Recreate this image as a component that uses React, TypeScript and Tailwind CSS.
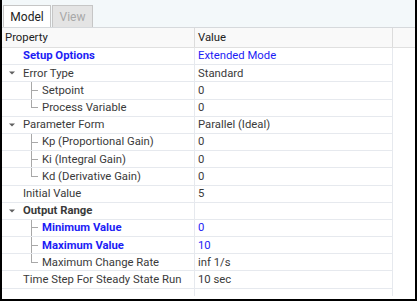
import React from "react";

type Row = {
  label: string;
  value: string;
  level: 0 | 1;
  expander?: boolean;
  bold?: boolean;
  blue?: boolean;
  valueBlue?: boolean;
  last?: boolean;
};

const rows: Row[] = [
  { label: "Setup Options", value: "Extended Mode", level: 0, bold: true, blue: true, valueBlue: true },
  { label: "Error Type", value: "Standard", level: 0, expander: true },
  { label: "Setpoint", value: "0", level: 1 },
  { label: "Process Variable", value: "0", level: 1, last: true },
  { label: "Parameter Form", value: "Parallel (Ideal)", level: 0, expander: true },
  { label: "Kp (Proportional Gain)", value: "0", level: 1 },
  { label: "Ki (Integral Gain)", value: "0", level: 1 },
  { label: "Kd (Derivative Gain)", value: "0", level: 1, last: true },
  { label: "Initial Value", value: "5", level: 0 },
  { label: "Output Range", value: "", level: 0, expander: true, bold: true },
  { label: "Minimum Value", value: "0", level: 1, bold: true, blue: true, valueBlue: true },
  { label: "Maximum Value", value: "10", level: 1, bold: true, blue: true, valueBlue: true },
  { label: "Maximum Change Rate", value: "inf 1/s", level: 1, last: true },
  { label: "Time Step For Steady State Run", value: "10 sec", level: 0 },
];

function Expander() {
  return (
    <svg width="6" height="4" viewBox="0 0 6 4" className="shrink-0">
      <path d="M0 0.5 L6 0.5 L3 3.5 Z" fill="#606060" />
    </svg>
  );
}

function TreeLine({ last }: { last?: boolean }) {
  return (
    <div className="flex h-full w-[7px] shrink-0 flex-col">
      <div className="flex-1 border-b border-l border-[#a8a8a8]" />
      <div className={"flex-1 " + (last ? "" : "border-l border-[#a8a8a8]")} />
    </div>
  );
}

function GridRow({ row }: { row: Row }) {
  const labelCls =
    (row.bold ? "font-bold " : "") + (row.blue ? "text-[#1c1cf5]" : "text-[#3a3a3a]");
  return (
    <div className="flex h-[17.2px] items-stretch">
      <div className="flex w-[193px] items-center border-b border-r border-[#e6e9ee]">
        {row.level === 0 ? (
          <div className="flex items-center">
            <div className="flex w-[21px] items-center pl-[7px]">{row.expander && <Expander />}</div>
            <span className={"whitespace-nowrap " + labelCls}>{row.label}</span>
          </div>
        ) : (
          <div className="flex h-full items-center pl-[29px]">
            <TreeLine last={row.last} />
            <span className={"ml-[4px] whitespace-nowrap " + labelCls}>{row.label}</span>
          </div>
        )}
      </div>
      <div
        className={
          "flex w-[198px] items-center whitespace-nowrap border-b border-r border-[#e6e9ee] pl-[3px] " +
          (row.valueBlue ? "text-[#1c1cf5]" : "text-[#3a3a3a]")
        }
      >
        {row.value}
      </div>
    </div>
  );
}

export default function App() {
  return (
    <div
      className="flex h-[301px] w-[417px] flex-col border-x-2 border-b-2 border-black bg-white text-[11.3px] leading-none"
      style={{ fontFamily: 'Roboto, "Open Sans", sans-serif' }}
    >
      {/* tab strip */}
      <div className="flex h-[28px] shrink-0 items-end border-b border-[#d6d9dc] bg-[#f3f8fa] pl-[1px]">
        <div className="flex h-[22px] w-[48px] items-center justify-center border-x border-t border-[#c6c6c6] bg-white text-[12px] text-[#222222]">
          Model
        </div>
        <div className="ml-[1px] flex h-[22px] w-[41px] items-center justify-center border border-b-0 border-[#c6c6c6] bg-[#e4e4e4] text-[12px] text-[#a8a8a8]">
          View
        </div>
      </div>

      {/* header */}
      <div className="flex h-[20px] shrink-0 border-b border-[#e0e0e0] bg-[#f9f9f9] text-[#222222]">
        <div className="flex w-[193px] items-center border-r border-[#dcdcdc] pl-[3px]">Property</div>
        <div className="flex w-[198px] items-center border-r border-[#dcdcdc] pl-[3px]">Value</div>
      </div>

      {rows.map((r) => (
        <GridRow key={r.label} row={r} />
      ))}

      {/* empty space below rows */}
      <div className="flex flex-1">
        <div className="w-[193px] border-r border-[#e6e9ee]" />
        <div className="w-[198px] border-r border-[#e6e9ee]" />
      </div>
      <div className="h-[3px] shrink-0" />
    </div>
  );
}
